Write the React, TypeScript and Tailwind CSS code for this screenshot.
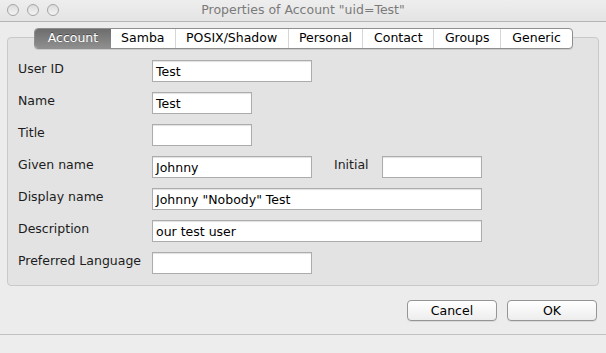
import { ReactNode } from 'react';

const FONT = { fontFamily: '"DejaVu Sans", "Liberation Sans", sans-serif' };

const TABS = ['Account', 'Samba', 'POSIX/Shadow', 'Personal', 'Contact', 'Groups', 'Generic'];
const TAB_WIDTHS = ['w-[76px]', 'w-[64px]', 'w-[113px]', 'w-[75px]', 'w-[71px]', 'w-[67px]', 'w-[72px]'];

function TrafficLight() {
  return (
    <span className="h-[12px] w-[12px] rounded-full border border-[#a5a5a5] bg-gradient-to-b from-[#dcdcdc] to-[#f4f4f4]" />
  );
}

function Field({ value = '', width }: { value?: string; width: string }) {
  return (
    <div
      className={`${width} h-[22px] border border-[#acacac] bg-white px-[3px] pt-[2px] text-[12.5px] leading-[17px] text-black shadow-[inset_0_1px_1px_rgba(0,0,0,0.12)]`}
    >
      {value}
    </div>
  );
}

function Row({ label, children }: { label: string; children: ReactNode }) {
  return (
    <div className="flex items-start">
      <span className="w-[134px] pt-[1px] text-[12.5px] leading-[16px] text-[#1c1c1c]">{label}</span>
      {children}
    </div>
  );
}

function Button({ children }: { children: ReactNode }) {
  return (
    <button className="h-[21px] w-[90px] rounded-[4px] border border-[#959595] bg-gradient-to-b from-white to-[#ededed] text-[12.5px] leading-[19px] text-black shadow-[0_1px_0_rgba(0,0,0,0.08)]">
      {children}
    </button>
  );
}

export default function App() {
  return (
    <div className="flex h-[353px] w-[606px] flex-col bg-[#ececec]" style={FONT}>
      <div className="relative flex h-[22px] items-center border-b border-[#b5b5b5] bg-gradient-to-b from-[#eeeeee] to-[#e4e4e4]">
        <div className="absolute left-[7px] top-[4px] flex gap-[8px]">
          <TrafficLight />
          <TrafficLight />
          <TrafficLight />
        </div>
        <div className="w-full text-center text-[12.5px] text-[#7a7a7a]">Properties of Account "uid=Test"</div>
      </div>

      <div className="relative z-10 ml-[34px] mt-[6px] flex h-[21px] w-[539px] overflow-hidden rounded-[4px] border border-[#8e8e8e] bg-white shadow-[0_1px_0_rgba(0,0,0,0.1)]">
        {TABS.map((tab, i) => (
          <div
            key={tab}
            className={`${TAB_WIDTHS[i]} flex items-center justify-center text-[12.5px] ${
              i === 0
                ? 'bg-gradient-to-b from-[#6d6d6d] to-[#8f8f8f] text-white [text-shadow:0_-1px_0_rgba(0,0,0,0.4)]'
                : 'text-black'
            } ${i > 1 ? 'border-l border-[#d6d6d6]' : ''}`}
          >
            {tab}
          </div>
        ))}
      </div>

      <div className="ml-[7px] mt-[-12px] flex h-[249px] w-[592px] flex-col gap-[10px] rounded-[4px] border border-[#c9c9c9] bg-[#e3e3e3] pl-[10px] pt-[22px]">
        <Row label="User ID">
          <Field value="Test" width="w-[160px]" />
        </Row>
        <Row label="Name">
          <Field value="Test" width="w-[100px]" />
        </Row>
        <Row label="Title">
          <Field width="w-[100px]" />
        </Row>
        <Row label="Given name">
          <Field value="Johnny" width="w-[160px]" />
          <span className="ml-[22px] w-[48px] pt-[1px] text-[12.5px] leading-[16px] text-[#1c1c1c]">Initial</span>
          <Field width="w-[100px]" />
        </Row>
        <Row label="Display name">
          <Field value={'Johnny "Nobody" Test'} width="w-[330px]" />
        </Row>
        <Row label="Description">
          <Field value="our test user" width="w-[330px]" />
        </Row>
        <Row label="Preferred Language">
          <Field width="w-[160px]" />
        </Row>
      </div>

      <div className="mr-[9px] mt-[14px] flex justify-end gap-[10px]">
        <Button>Cancel</Button>
        <Button>OK</Button>
      </div>

      <div className="mt-auto h-[19px] border-t border-[#c2c2c2] bg-[#ededed]" />
    </div>
  );
}
